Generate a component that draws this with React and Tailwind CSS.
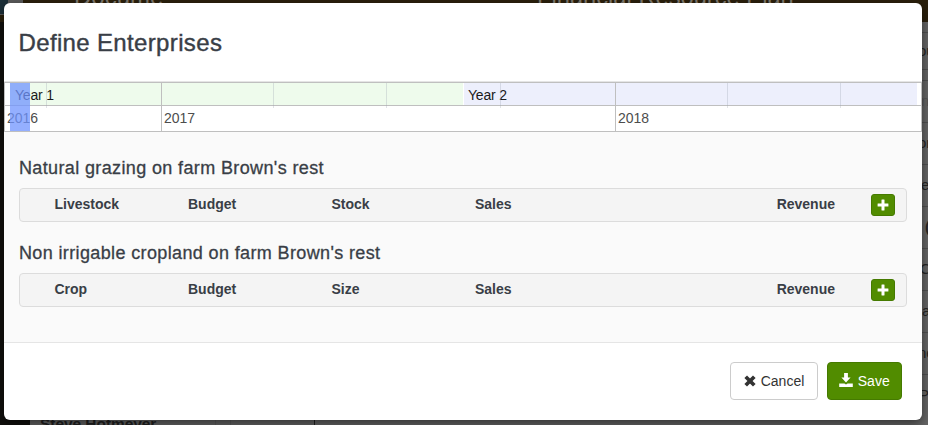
import React from "react";

const QUARTERS = [46, 273, 386, 500, 727, 840];
const YEARS = [
  { label: "2016", left: 4 },
  { label: "2017", left: 161 },
  { label: "2018", left: 615 },
];
const SIDE_ROWS = [
  { text: "ou", style: "h-[37px] pl-0" },
  { text: "", style: "h-[11px]" },
  { text: "n", style: "h-[42px] pl-[3px] text-[#555]" },
  { text: "or", style: "h-[42px] pl-0" },
  { text: "e", style: "h-[42px] pl-[3px]" },
  { text: "(", style: "h-[42px] pl-[7px] font-bold" },
  { text: "C", style: "h-[42px] pl-[2px]" },
  { text: "a", style: "h-[42px] pl-[4px]" },
  { text: "ne", style: "h-[42px] pl-0" },
  { text: "Pe", style: "h-[42px] pl-[1px]" },
];

function PlusIcon() {
  return (
    <svg width="12" height="12" viewBox="0 0 12 12" fill="#fff" className="block">
      <path d="M4.8 .6h2.4q.3 0 .3.3v3.6h3.6q.3 0 .3.3v2.4q0 .3-.3.3H7.5v3.6q0 .3-.3.3H4.8q-.3 0-.3-.3V7.5H.9q-.3 0-.3-.3V4.8q0-.3.3-.3h3.6V.9q0-.3.3-.3z" />
    </svg>
  );
}

function RemoveIcon() {
  return (
    <svg width="12" height="12" viewBox="0 0 12 12" className="-mt-px block">
      <path d="M1.7 1.7 10.3 10.3M10.3 1.7 1.7 10.3" stroke="#333" strokeWidth="3.7" fill="none" />
    </svg>
  );
}

function SaveIcon() {
  return (
    <svg width="14" height="14" viewBox="0 0 14 14" fill="#fff" className="-mt-[2px] block">
      <path d="M5.1 0h3.8v4.4h2.7L7 9.6 2.4 4.4h2.7zM.2 10.4h5.200L7 11.500l1.600-1.100h5.200V14H.2z" />
    </svg>
  );
}

function Section({ title, columns }) {
  return (
    <section className="h-[85px]">
      <h4 className="h-[30px] whitespace-nowrap text-[18px] leading-[20px] tracking-[0.37px] text-[#393e46] [-webkit-text-stroke:0.3px_#393e46]">{title}</h4>
      <div className="flex h-[34px] items-center rounded-[4px] border border-[#dcdcdc] bg-[#f4f4f4] pl-[34.5px] pr-[11px] text-[14px] font-bold leading-[20px] text-[#393e46]">
        <span className="-mt-[2px] w-[133.5px]">{columns[0]}</span>
        <span className="-mt-[2px] w-[143.5px]">{columns[1]}</span>
        <span className="-mt-[2px] w-[143.5px]">{columns[2]}</span>
        <span className="-mt-[2px] flex-1">{columns[3]}</span>
        <span className="-mt-[2px] mr-[36px]">{columns[4]}</span>
        <button className="flex h-[22px] w-[24px] items-center justify-center rounded-[3px] border border-[#457a00] bg-[#518c00]">
          <PlusIcon />
        </button>
      </div>
    </section>
  );
}

function Timeline() {
  return (
    <div className="relative h-[50px] border border-[#bfbfbf] bg-white">
      <div className="flex h-[23px] border-b border-[#bfbfbf] pl-[5px] pr-[4px] text-[14px] leading-[24px] tracking-[-0.2px] text-[#1a1a1a]">
        <div className="w-[453px] bg-[#eefbec] pl-[5px]">Year 1</div>
        <div className="ml-px flex-1 bg-[#edeffc] pl-[4px]">Year 2</div>
      </div>
      <div className="h-[25px]" />
      {QUARTERS.map((x) => (
        <i key={x} className="absolute top-0 h-[25px] w-px bg-[#9ca3af]/30" style={{ left: x - 5 }} />
      ))}
      {YEARS.map((y, i) => (
        <div
          key={y.label}
          className={`absolute top-0 h-[48px] pt-[24px] text-[14px] leading-[22px] text-[#4d4d4d] ${i ? "border-l border-[#bfbfbf] pl-[2px]" : "pl-[3px]"}`}
          style={{ left: y.left - 5 }}
        >
          {y.label}
        </div>
      ))}
      <div className="absolute left-[5px] top-0 h-[48px] w-[20px] bg-[#7094ff]/75" />
    </div>
  );
}

export default function App() {
  return (
    <div className="relative h-[425px] w-[928px] overflow-hidden bg-[#666] font-['Liberation_Sans',Arial,sans-serif]">
      <div className="flex h-[22px] bg-[#2b200c] text-[24px] leading-[24px] text-[#817b70]">
        <div className="h-[15px] w-[23px] border-b border-r-[15px] border-[#5b5b5b] bg-[#1d3039]" />
        <span className="-mt-[15px] ml-[51px] w-[463px]">Docume</span>
        <span className="-mt-[15px] whitespace-nowrap text-[23.7px]">Financial Resource Plan</span>
      </div>
      <div className="flex h-[403px]">
        <div className="w-[30px] bg-[#11100d]" />
        <div className="flex flex-1 items-end pl-[10px] text-[15.4px] font-bold leading-[20px] text-[#222]">
          <span className="-mb-[9px] w-[175px]">Steve Hofmeyer</span>
          <span className="h-[10px] w-[16px] border-x border-[#5c5c5c]" />
          <span className="ml-[83px] h-[10px] w-px bg-[#222]" />
        </div>
        <div className="w-[10px] overflow-hidden pt-[10px] text-[15px] text-[#252525]">
          {SIDE_ROWS.map((r, i) => (
            <div key={i} className={`${r.style} flex items-center border-t border-[#505050]`}>{r.text}</div>
          ))}
        </div>
      </div>

      <div className="absolute left-[4px] top-[3px] flex h-[417px] w-[918px] flex-col overflow-hidden rounded-[6px] bg-white shadow-[0_4px_12px_rgba(0,0,0,0.5)]">
        <header className="h-[79px] border-b border-[#e5e5e5] pl-[14.5px] pt-[25px]">
          <h3 className="text-[24px] leading-[30px] tracking-[0.35px] text-[#393e46] [-webkit-text-stroke:0.4px_#393e46]">Define Enterprises</h3>
        </header>
        <Timeline />
        <main className="h-[211px] border-b border-[#e5e5e5] bg-[#fafafa] pl-[15px] pr-[15px] pt-[26px]">
          <Section title="Natural grazing on farm Brown's rest" columns={["Livestock", "Budget", "Stock", "Sales", "Revenue"]} />
          <Section title="Non irrigable cropland on farm Brown's rest" columns={["Crop", "Budget", "Size", "Sales", "Revenue"]} />
        </main>
        <footer className="flex justify-end gap-[9px] pr-[20px] pt-[19px] text-[14px] leading-[20px]">
          <button className="flex h-[38px] w-[88px] items-center justify-center gap-[5px] rounded-[4px] border border-[#ccc] bg-white text-[#333]">
            <RemoveIcon />
            Cancel
          </button>
          <button className="flex h-[38px] w-[75px] items-center justify-center gap-[4.5px] rounded-[4px] border border-[#457a00] bg-[#518c00] text-white">
            <SaveIcon />
            Save
          </button>
        </footer>
      </div>
    </div>
  );
}
